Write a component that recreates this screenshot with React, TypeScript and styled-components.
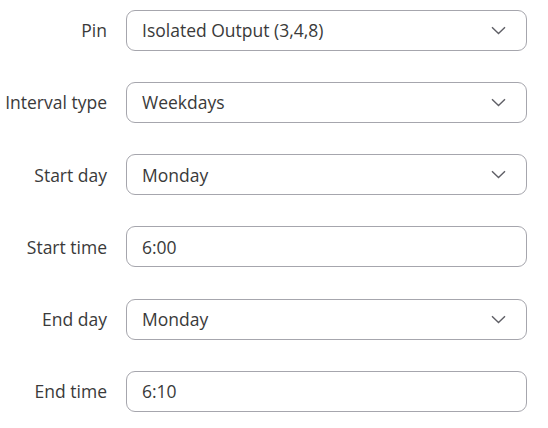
import styled, { createGlobalStyle } from 'styled-components';

const Global = createGlobalStyle`
    body {
        margin: 0;
        background: #ffffff;
        font-family: "Open Sans", "Liberation Sans", sans-serif;
    }
`;

const Form = styled.div`
    display: grid;
    grid-template-columns: 107px 401px;
    column-gap: 19px;
    row-gap: 31.3px;
    padding: 9.5px 0 0 0;
    align-items: center;
`;

const Label = styled.label`
    text-align: right;
    font-size: 17.5px;
    color: #3a3a3a;
    white-space: nowrap;
`;

const Field = styled.div<{ $select?: boolean }>`
    box-sizing: border-box;
    height: 41px;
    border: 1px solid #a6a6ad;
    border-radius: 9px;
    display: flex;
    align-items: center;
    justify-content: space-between;
    padding: 0 20px 0 15px;
    font-size: 17.5px;
    color: #3a3a3a;
    background: #fff;
    cursor: ${(p) => (p.$select ? 'pointer' : 'text')};
`;

const Chevron = () => (
    <svg width="15" height="9" viewBox="0 0 15 9" fill="none">
        <path d="M1 1.2 L7.5 7.5 L14 1.2" stroke="#5f5f66" strokeWidth="1.4" />
    </svg>
);

type Row = {
    label: string;
    value: string;
    select?: boolean;
};

const rows: Row[] = [
    { label: 'Pin', value: 'Isolated Output (3,4,8)', select: true },
    { label: 'Interval type', value: 'Weekdays', select: true },
    { label: 'Start day', value: 'Monday', select: true },
    { label: 'Start time', value: '6:00' },
    { label: 'End day', value: 'Monday', select: true },
    { label: 'End time', value: '6:10' },
];

export default function App() {
    return (
        <>
            <Global />
            <Form>
                {rows.map((r) => (
                    <>
                        <Label key={r.label + '-l'}>{r.label}</Label>
                        <Field key={r.label + '-f'} $select={r.select}>
                            <span>{r.value}</span>
                            {r.select && <Chevron />}
                        </Field>
                    </>
                ))}
            </Form>
        </>
    );
}
